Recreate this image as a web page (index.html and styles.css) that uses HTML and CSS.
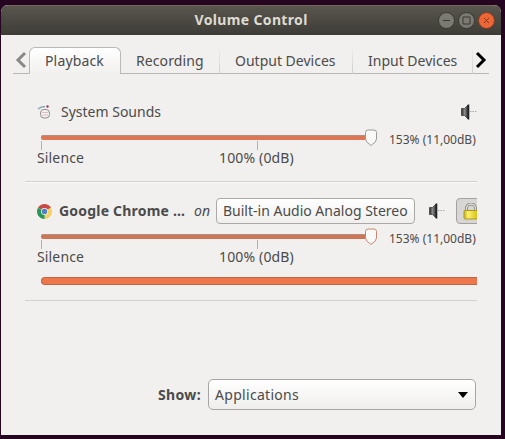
FILE: index.html
```html
<!DOCTYPE html>
<html lang="en">
<head>
<meta charset="utf-8">
<title>Volume Control</title>
<link rel="stylesheet" href="styles.css">
</head>
<body>
<svg class="defs" width="0" height="0" aria-hidden="true">
  <defs>
    <linearGradient id="cone" x1="0" x2="1" y1="0" y2="0"><stop offset="0" stop-color="#222"/><stop offset=".45" stop-color="#8b8b8b"/><stop offset="1" stop-color="#333"/></linearGradient>
    <linearGradient id="gold" x1="0" x2="1" y1="0" y2="0"><stop offset="0" stop-color="#c5b51c"/><stop offset=".3" stop-color="#fff06a"/><stop offset="1" stop-color="#d5be10"/></linearGradient>
    <symbol id="speaker" viewBox="0 0 17 16">
      <path d="M1.500 4.500h3L8 1v14l-3.500-3.500h-3z" fill="url(#cone)" stroke="#333" stroke-width=".7"/>
      <path d="M8.500 .5v15" stroke="#222" stroke-width="1.600"/>
      <path d="M10 7.500h6.500" stroke="#aaa" stroke-dasharray="1.500 1"/>
    </symbol>
    <symbol id="thumb" viewBox="0 0 14 18">
      <path d="M1.500 3.500Q1.500 1 4 1h6q2.500 0 2.500 2.500V10q0 3-5.500 6.500Q1.500 13 1.500 10z" fill="#f9f9f7"/>
    </symbol>
  </defs>
</svg>
<main class="window">
  <header class="titlebar">
    <h1 class="title">Volume Control</h1>
    <div class="controls">
      <svg class="control" viewBox="0 0 17 17"><circle cx="8.500" cy="8.500" r="8"/><path d="M5 8.500h7"/></svg>
      <svg class="control" viewBox="0 0 17 17"><circle cx="8.500" cy="8.500" r="8"/><path d="M5 5h7v7H5z"/></svg>
      <svg class="control close" viewBox="0 0 17 17"><circle cx="8.500" cy="8.500" r="8"/><path d="M6 6l5 5M11 6l-5 5"/></svg>
    </div>
  </header>
  <nav class="tabs">
    <svg class="arrow prev" viewBox="0 0 16 20"><path d="M12 3L5 10l7 7"/></svg>
    <span class="tab active">Playback</span>
    <span class="tab recording">Recording</span>
    <span class="tab output">Output Devices</span>
    <span class="tab input">Input Devices</span>
    <svg class="arrow next" viewBox="0 0 16 20"><path d="M4 3l7 7-7 7"/></svg>
  </nav>
  <section class="stream system">
    <div class="heading">
      <svg class="app-icon" viewBox="0 0 16 16"><path d="M1 5Q4 2.500 8 2.500" fill="none" stroke="#83a4ad" stroke-width="1.300"/><circle cx="10.500" cy="2.500" r="1.200" fill="#a63367"/><rect x="3.500" y="5.500" width="9" height="8.500" rx="3.500" fill="#f6f2f2" stroke="#938b91"/><path d="M5 8.500h6M5 11h6" stroke="#d0b0b9" stroke-width=".8"/></svg>
      <span class="name">System Sounds</span>
      <svg class="speaker"><use href="#speaker"/></svg>
    </div>
    <div class="level"><div class="scale"><div class="trough"></div><svg class="thumb"><use href="#thumb"/></svg></div><span class="value">153% (11,00dB)</span></div>
    <div class="marks"><span class="silence">Silence</span><span class="full">100% (0dB)</span></div>
  </section>
  <section class="stream chrome">
    <div class="heading">
      <svg class="app-icon" viewBox="0 0 16 16"><path d="M8 8L1.100 4A8 8 0 0 1 14.900 4z" fill="#c94a42"/><path d="M8 8l6.900-4A8 8 0 0 1 8 16z" fill="#f5d062"/><path d="M8 8v8A8 8 0 0 1 1.100 4z" fill="#279657"/><circle cx="8" cy="8" r="3.700" fill="#f4f5ed"/><circle cx="8" cy="8" r="2.900" fill="#5080c5"/></svg>
      <strong class="name">Google Chrome …</strong>
      <em class="on">on</em>
      <span class="device">Built-in Audio Analog Stereo</span>
      <svg class="speaker"><use href="#speaker"/></svg>
      <span class="lock"><svg viewBox="0 0 16 17"><path d="M3.500 9V5.500a4.500 4.500 0 0 1 9 0V9" fill="none" stroke="#88887f" stroke-width="3"/><path d="M3.500 9V5.500a4.500 4.500 0 0 1 9 0V9" fill="none" stroke="#deded8" stroke-width="1.300"/><rect x="1" y="7.500" width="14" height="8.500" rx="1" fill="url(#gold)" stroke="#aa9824"/></svg></span>
    </div>
    <div class="level"><div class="scale"><div class="trough"></div><svg class="thumb"><use href="#thumb"/></svg></div><span class="value">153% (11,00dB)</span></div>
    <div class="marks"><span class="silence">Silence</span><span class="full">100% (0dB)</span></div>
    <div class="meter"></div>
  </section>
  <footer class="filter">
    <strong>Show:</strong>
    <div class="select"><span>Applications</span><svg viewBox="0 0 10 6"><path d="M0 0h10L5 6z"/></svg></div>
  </footer>
</main>
</body>
</html>
```

FILE: styles.css
```css
* { box-sizing: border-box; }
body {
  margin: 0;
  width: 505px;
  height: 439px;
  padding: 5px 4px 4px 1px;
  overflow: hidden;
  background: #25051f;
  color: #4b4b4b;
  font: 14px/20px "Noto Sans", sans-serif;
  white-space: nowrap;
}
.defs { position: absolute; }
svg { display: block; flex: none; }
.window { height: 430px; background: #f1f0ee; border-radius: 7px 7px 0 0; overflow: hidden; }
.titlebar {
  display: grid;
  grid-template-columns: 1fr auto 1fr;
  align-items: center;
  height: 30px;
  padding-right: 6px;
  background: linear-gradient(#58564d, #3d3c37);
  border-top: 1px solid #75675f;
}
.title { grid-column: 2; width: 113px; margin: -2px 0 0 6px; font-size: 14px; line-height: 20px; letter-spacing: .35px; color: #dfdbd2; }
.controls { display: flex; gap: 3px; justify-content: flex-end; margin-top: -1px; }
.control { width: 17px; height: 17px; fill: #7b7a72; stroke: #383832; }
.close { fill: #ee6536; stroke: #783c26; }
.tabs { display: flex; height: 27px; margin: 12px 12px 0; border-bottom: 1px solid #b6b6b2; }
.arrow { width: 16px; height: 20px; margin-top: 3px; fill: none; stroke: #888; stroke-width: 3; }
.next { stroke: #000; }
.tab { height: 27px; padding-top: 4px; padding-left: 15px; }
.active { width: 92px; border: 1px solid #b9b9b5; border-bottom: 0; border-radius: 6px 6px 0 0; background: linear-gradient(#fff, #f1f0ee); padding-top: 3px; letter-spacing: .15px; }
.recording { width: 99px; letter-spacing: .1px; }
.output { width: 133px; }
.input { width: 120px; }
.recording, .output, .input { border-right: 1px solid; border-image: linear-gradient(#f1f0ee, #ccc) 1; }
.stream { margin: 0 24px; padding-left: 11px; border-bottom: 1px solid #d2d1ce; }
.system { height: 108px; padding-top: 25px; }
.chrome { height: 119px; padding-top: 15px; border-top: 1px solid #fafaf8; }
.heading { display: flex; align-items: center; height: 26px; overflow: hidden; }
.heading > * { flex: none; }
.app-icon { width: 16px; height: 16px; margin-right: 8px; margin-left: 1px; }
.chrome .app-icon { width: 15px; height: 15px; margin-right: 7px; }
.chrome .name { width: 129px; letter-spacing: .2px; }
.speaker { width: 17px; height: 16px; }
.system .speaker { margin-left: auto; }
.on { width: 16px; margin: 0 6px; }
.device { width: 199px; height: 26px; padding: 2px 6px; border: 1px solid #aaa9a5; border-radius: 4px; background: linear-gradient(#fff, #f0efed); }
.chrome .speaker { margin-left: 13px; }
.lock { width: 28px; height: 26px; margin-left: 11px; padding: 4px 6px; border: 1px solid #a2a29e; border-radius: 4px; background: #d7d6d4; }
.lock svg { width: 16px; height: 17px; }
.level { display: flex; align-items: flex-start; height: 20px; padding-top: 4px; }
.scale { display: flex; align-items: flex-start; width: 337px; height: 18px; margin-left: 5px; }
.trough { flex: none; width: 324px; height: 5px; margin: 6px -1px 0 0; border-top: 1px solid #af8f81; border-radius: 2px 0 0 2px; background: #dc7654; }
.thumb { width: 14px; height: 18px; stroke: #999b96; position: relative; }
.chrome .trough { background: #cc7656; }
.chrome .thumb { stroke: #c98770; }
.value { margin: 1px 0 0 11px; font-size: 12px; }
.marks { display: grid; grid-template-columns: 182px 1fr; height: 29px; padding-left: 1px; }
.marks span { height: 29px; padding-top: 4px; margin-top: -1px; position: relative; letter-spacing: .15px; }
.marks span::before { content: ""; position: absolute; left: 4px; top: -3px; width: 1px; height: 9px; background: #b3b2ae; }
.marks .full::before { left: 38px; }
.meter { height: 8px; margin: 4px 0 0 5px; border: 1px solid #bd6644; border-right: 0; border-radius: 4px 0 0 4px; background: #ef774c; }
.filter { display: flex; align-items: center; margin: 78px 24px 0 157px; }
.filter strong { width: 50px; flex: none; letter-spacing: .35px; }
.select { display: flex; align-items: center; justify-content: space-between; width: 268px; height: 31px; padding: 0 7px 0 6px; border: 1px solid #a6a5a1; border-radius: 5px; background: linear-gradient(#fff, #efeeec); letter-spacing: .3px; }
.select svg { width: 10px; height: 6px; }
```
